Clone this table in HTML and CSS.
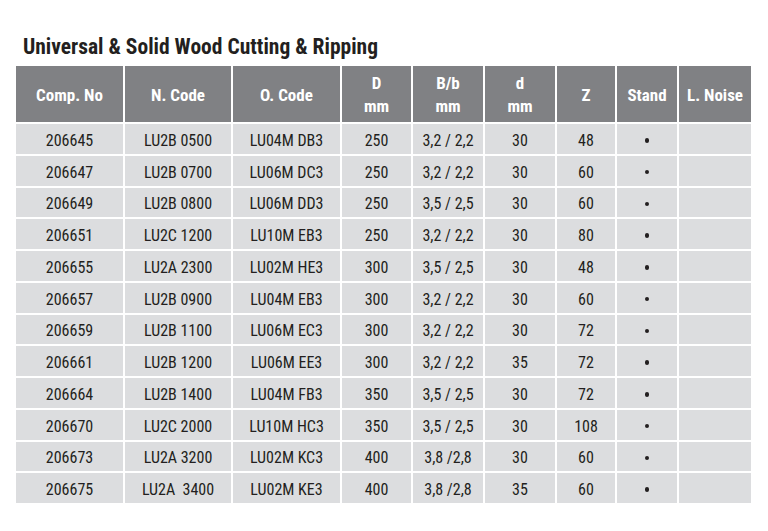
FILE: index.html
```html
<!DOCTYPE html>
<html lang="en">
<head>
<meta charset="utf-8">
<title>Universal &amp; Solid Wood Cutting &amp; Ripping</title>
<link rel="stylesheet" href="styles.css">
</head>
<body>
<div class="page">
  <h1 class="title">Universal &amp; Solid Wood Cutting &amp; Ripping</h1>
  <div class="grid">
    <div class="th">Comp. No</div>
    <div class="th">N. Code</div>
    <div class="th">O. Code</div>
    <div class="th"><span>D</span><span>mm</span></div>
    <div class="th"><span>B/b</span><span>mm</span></div>
    <div class="th"><span>d</span><span>mm</span></div>
    <div class="th">Z</div>
    <div class="th">Stand</div>
    <div class="th">L. Noise</div>

    <div class="td">206645</div><div class="td">LU2B 0500</div><div class="td">LU04M DB3</div><div class="td">250</div><div class="td">3,2 / 2,2</div><div class="td">30</div><div class="td">48</div><div class="td"><i class="dot"></i></div><div class="td"></div>
    <div class="td">206647</div><div class="td">LU2B 0700</div><div class="td">LU06M DC3</div><div class="td">250</div><div class="td">3,2 / 2,2</div><div class="td">30</div><div class="td">60</div><div class="td"><i class="dot"></i></div><div class="td"></div>
    <div class="td">206649</div><div class="td">LU2B 0800</div><div class="td">LU06M DD3</div><div class="td">250</div><div class="td">3,5 / 2,5</div><div class="td">30</div><div class="td">60</div><div class="td"><i class="dot"></i></div><div class="td"></div>
    <div class="td">206651</div><div class="td">LU2C 1200</div><div class="td">LU10M EB3</div><div class="td">250</div><div class="td">3,2 / 2,2</div><div class="td">30</div><div class="td">80</div><div class="td"><i class="dot"></i></div><div class="td"></div>
    <div class="td">206655</div><div class="td">LU2A 2300</div><div class="td">LU02M HE3</div><div class="td">300</div><div class="td">3,5 / 2,5</div><div class="td">30</div><div class="td">48</div><div class="td"><i class="dot"></i></div><div class="td"></div>
    <div class="td">206657</div><div class="td">LU2B 0900</div><div class="td">LU04M EB3</div><div class="td">300</div><div class="td">3,2 / 2,2</div><div class="td">30</div><div class="td">60</div><div class="td"><i class="dot"></i></div><div class="td"></div>
    <div class="td">206659</div><div class="td">LU2B 1100</div><div class="td">LU06M EC3</div><div class="td">300</div><div class="td">3,2 / 2,2</div><div class="td">30</div><div class="td">72</div><div class="td"><i class="dot"></i></div><div class="td"></div>
    <div class="td">206661</div><div class="td">LU2B 1200</div><div class="td">LU06M EE3</div><div class="td">300</div><div class="td">3,2 / 2,2</div><div class="td">35</div><div class="td">72</div><div class="td"><i class="dot"></i></div><div class="td"></div>
    <div class="td">206664</div><div class="td">LU2B 1400</div><div class="td">LU04M FB3</div><div class="td">350</div><div class="td">3,5 / 2,5</div><div class="td">30</div><div class="td">72</div><div class="td"><i class="dot"></i></div><div class="td"></div>
    <div class="td">206670</div><div class="td">LU2C 2000</div><div class="td">LU10M HC3</div><div class="td">350</div><div class="td">3,5 / 2,5</div><div class="td">30</div><div class="td">108</div><div class="td"><i class="dot"></i></div><div class="td"></div>
    <div class="td">206673</div><div class="td">LU2A 3200</div><div class="td">LU02M KC3</div><div class="td">400</div><div class="td">3,8 /2,8</div><div class="td">30</div><div class="td">60</div><div class="td"><i class="dot"></i></div><div class="td"></div>
    <div class="td">206675</div><div class="td">LU2A&nbsp; 3400</div><div class="td">LU02M KE3</div><div class="td">400</div><div class="td">3,8 /2,8</div><div class="td">35</div><div class="td">60</div><div class="td"><i class="dot"></i></div><div class="td"></div>
  </div>
</div>
</body>
</html>
```

FILE: styles.css
```css
html, body {
  margin: 0;
  padding: 0;
  background: #ffffff;
}

.page {
  padding: 34px 0 0 16px;
  font-family: Roboto, "Liberation Sans", Arial, sans-serif;
  font-stretch: 75%;
  color: #231f20;
}

.title {
  margin: 0 0 6px 7px;
  font-size: 21.5px;
  line-height: 26px;
  font-weight: 700;
  color: #231f20;
}

.grid {
  display: grid;
  grid-template-columns: 107px 106px 107px 69px 70px 70px 58px 60px 72px;
  grid-template-rows: 56px repeat(12, 29.75px);
  column-gap: 2px;
  row-gap: 2px;
  width: 735px;
}

.th {
  background: #808184;
  color: #ffffff;
  font-weight: 700;
  font-size: 17px;
  line-height: 23px;
  display: flex;
  flex-direction: column;
  align-items: center;
  justify-content: center;
  text-align: center;
  padding-top: 2px;
  box-sizing: border-box;
}

.td {
  background: #dcdddf;
  font-size: 16px;
  display: flex;
  align-items: center;
  justify-content: center;
  padding-top: 3px;
  box-sizing: border-box;
}

.dot {
  display: block;
  width: 4.5px;
  height: 4.5px;
  border-radius: 50%;
  background: #231f20;
}
```
